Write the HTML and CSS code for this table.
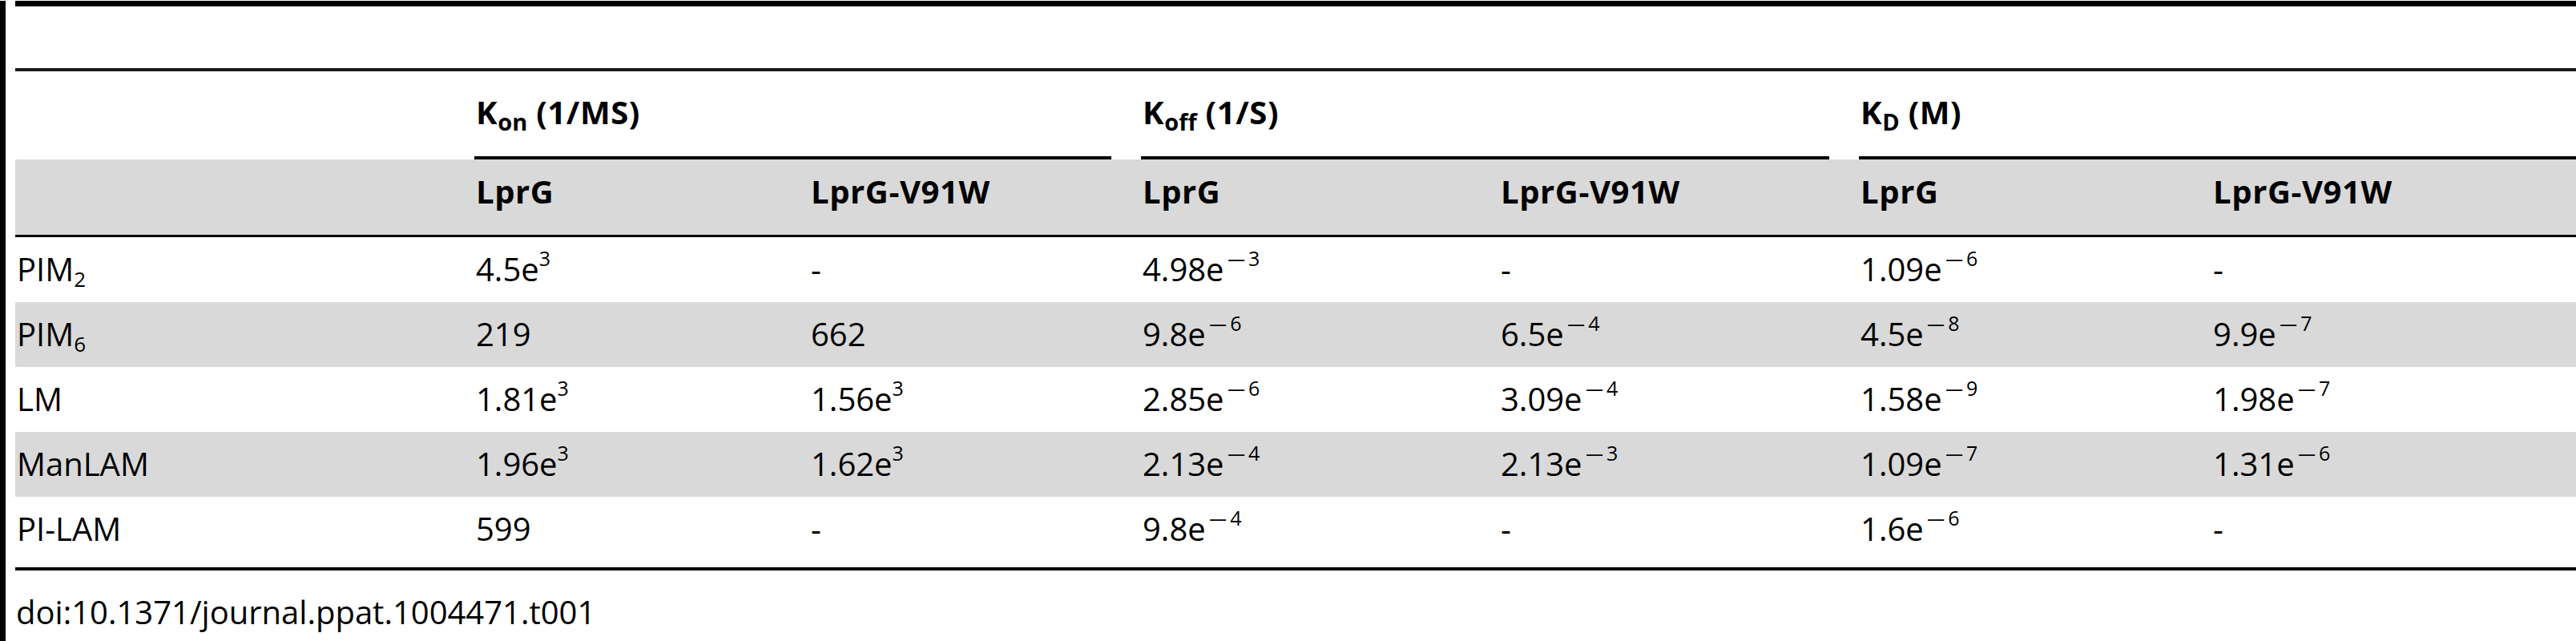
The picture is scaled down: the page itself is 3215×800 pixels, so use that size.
FILE: index.html
```html
<!DOCTYPE html>
<html>
<head>
<meta charset="utf-8">
<link rel="stylesheet" href="styles.css">
</head>
<body>
<div class="frame">
  <div class="toprule"></div>
  <div class="tablewrap">
    <table class="data">
      <colgroup>
        <col class="c-label"><col class="c1"><col class="c2"><col class="c3"><col class="c4"><col class="c5"><col class="c6">
      </colgroup>
      <thead>
        <tr class="grp-row">
          <th class="blank"></th>
          <th colspan="2"><div class="grp">K<sub class="hs">on</sub> (1/MS)</div></th>
          <th colspan="2"><div class="grp">K<sub class="hs">off</sub> (1/S)</div></th>
          <th colspan="2"><div class="grp last">K<sub class="hs">D</sub> (M)</div></th>
        </tr>
        <tr class="sub-row">
          <th></th>
          <th>LprG</th><th>LprG-V91W</th>
          <th>LprG</th><th>LprG-V91W</th>
          <th>LprG</th><th>LprG-V91W</th>
        </tr>
      </thead>
      <tbody>
        <tr>
          <td>PIM<sub>2</sub></td>
          <td>4.5e<sup>3</sup></td><td>-</td>
          <td>4.98e<sup><span class="mn">−</span>3</sup></td><td>-</td>
          <td>1.09e<sup><span class="mn">−</span>6</sup></td><td>-</td>
        </tr>
        <tr class="alt">
          <td>PIM<sub>6</sub></td>
          <td>219</td><td>662</td>
          <td>9.8e<sup><span class="mn">−</span>6</sup></td><td>6.5e<sup><span class="mn">−</span>4</sup></td>
          <td>4.5e<sup><span class="mn">−</span>8</sup></td><td>9.9e<sup><span class="mn">−</span>7</sup></td>
        </tr>
        <tr>
          <td>LM</td>
          <td>1.81e<sup>3</sup></td><td>1.56e<sup>3</sup></td>
          <td>2.85e<sup><span class="mn">−</span>6</sup></td><td>3.09e<sup><span class="mn">−</span>4</sup></td>
          <td>1.58e<sup><span class="mn">−</span>9</sup></td><td>1.98e<sup><span class="mn">−</span>7</sup></td>
        </tr>
        <tr class="alt">
          <td>ManLAM</td>
          <td>1.96e<sup>3</sup></td><td>1.62e<sup>3</sup></td>
          <td>2.13e<sup><span class="mn">−</span>4</sup></td><td>2.13e<sup><span class="mn">−</span>3</sup></td>
          <td>1.09e<sup><span class="mn">−</span>7</sup></td><td>1.31e<sup><span class="mn">−</span>6</sup></td>
        </tr>
        <tr class="lastrow">
          <td>PI-LAM</td>
          <td>599</td><td>-</td>
          <td>9.8e<sup><span class="mn">−</span>4</sup></td><td>-</td>
          <td>1.6e<sup><span class="mn">−</span>6</sup></td><td>-</td>
        </tr>
      </tbody>
    </table>
  </div>
  <div class="doi">doi:10.1371/journal.ppat.1004471.t001</div>
</div>
</body>
</html>
```

FILE: styles.css
```css
html, body {
  margin: 0;
  padding: 0;
  background: #ffffff;
  overflow: hidden;
}

body {
  font-family: "Open Sans", "Noto Sans", sans-serif;
  color: #000;
  font-size: 40px;
}

.frame {
  height: 800px;
  border-left: 7px solid #000;
  padding-left: 12px;
  box-sizing: border-box;
}

.toprule {
  margin-top: 1px;
  height: 7px;
  background: #000;
}

.tablewrap {
  margin-top: 77px;
  width: 3196px;
  overflow: hidden;
}

.data {
  width: 3196px;
  table-layout: fixed;
  border-collapse: separate;
  border-spacing: 0;
  border-top: 4px solid #1a1a1a;
}

.c-label { width: 573px; }
.c1 { width: 418px; }
.c2 { width: 414px; }
.c3 { width: 447px; }
.c4 { width: 449px; }
.c5 { width: 440px; }
.c6 { width: 455px; }

.data th,
.data td {
  text-align: left;
  vertical-align: top;
  white-space: nowrap;
  line-height: 48px;
  padding: 0 0 0 2px;
}

.data th {
  font-weight: 700;
  letter-spacing: 0.6px;
}

.grp-row th {
  padding: 0;
}

.grp {
  height: 110px;
  box-sizing: border-box;
  padding: 27px 0 0 2px;
  margin-right: 37px;
  border-bottom: 4px solid #000;
}

.grp.last {
  margin-right: 0;
}

.sub-row th {
  background: #d9d9d9;
  padding-top: 16px;
  padding-bottom: 30px;
  border-bottom: 3px solid #000;
}

.data td {
  padding-top: 16px;
  padding-bottom: 17px;
  font-weight: 400;
}

.data tr.alt td {
  background: #d9d9d9;
}

.data tr.lastrow td {
  padding-bottom: 24px;
  border-bottom: 4px solid #000;
}

sup {
  font-size: 25px;
  line-height: 0;
  vertical-align: 19px;
}

sub {
  font-size: 26px;
  line-height: 0;
  vertical-align: -7px;
}

sub.hs {
  font-size: 29px;
  vertical-align: -8px;
  letter-spacing: 0;
}

.mn {
  display: inline-block;
  font-family: "DejaVu Sans", sans-serif;
  font-size: 22px;
  transform: scaleX(1.45);
  margin: 0 6px 0 6px;
}

.doi {
  margin-top: 28px;
  line-height: 48px;
  padding-left: 1px;
}
```
